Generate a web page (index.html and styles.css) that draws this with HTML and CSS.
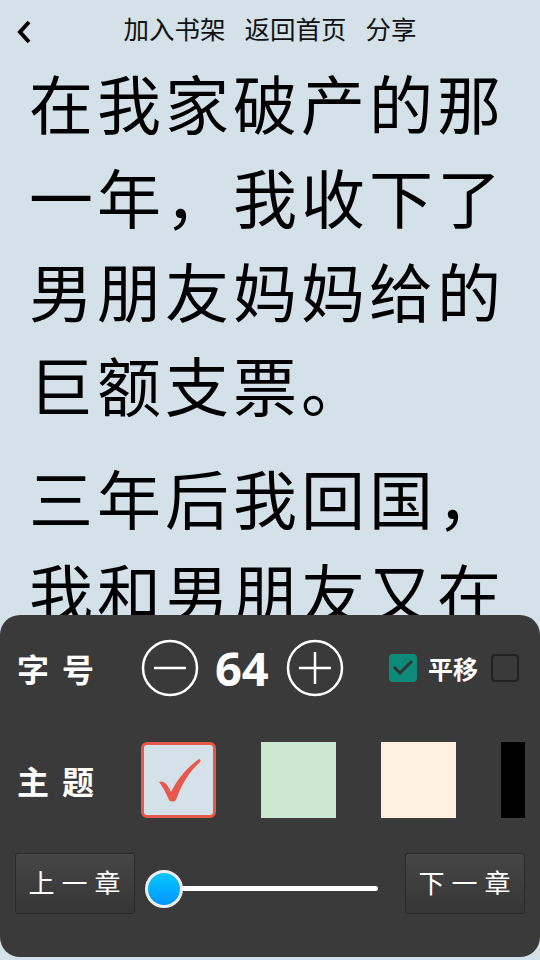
FILE: index.html
```html
<!DOCTYPE html>
<html lang="zh-CN">
<head>
    <meta charset="UTF-8">
    <meta name="viewport" content="width=device-width, initial-scale=1.0">
    <title>阅读</title>
    <link rel="stylesheet" href="styles.css">
</head>
<body>
    <div class="topbar">
        <svg class="back" width="18" height="26" viewBox="0 0 18 26">
            <path d="M14 3 L5 13 L14 23" fill="none" stroke="#000" stroke-width="4"/>
        </svg>
        <div class="menu">
            <span>加入书架</span>
            <span>返回首页</span>
            <span>分享</span>
        </div>
    </div>

    <div class="article">
        <p>在我家破产的那一年，我收下了男朋友妈妈给的巨额支票。</p>
        <p>三年后我回国，我和男朋友又在</p>
    </div>

    <!-- 设置面板 -->
    <div class="panel">
        <div class="row">
            <div class="label">字号</div>
            <svg class="round-btn" width="58" height="58" viewBox="0 0 58 58">
                <circle cx="29" cy="29" r="27" fill="none" stroke="#fff" stroke-width="2.5"/>
                <path d="M13 29 H45" stroke="#fff" stroke-width="2.5"/>
            </svg>
            <div class="size-value">64</div>
            <svg class="round-btn" width="58" height="58" viewBox="0 0 58 58">
                <circle cx="29" cy="29" r="27" fill="none" stroke="#fff" stroke-width="2.5"/>
                <path d="M13 29 H45 M29 13 V45" stroke="#fff" stroke-width="2.5"/>
            </svg>
            <div class="options">
                <span class="check checked">
                    <svg width="28" height="28" viewBox="0 0 28 28">
                        <path d="M5 13 L11 19 L23 7" fill="none" stroke="#333" stroke-width="3"/>
                    </svg>
                </span>
                <span class="option-text">平移</span>
                <span class="check"></span>
            </div>
        </div>

        <div class="row themes-row">
            <div class="label">主题</div>
            <div class="themes">
                <div class="theme theme-blue selected">
                    <svg width="70" height="70" viewBox="0 0 70 70">
                        <path d="M15 37 C19 35 23 38 27 47 C34 33 44 22 55 14 C57 15 57 16 56 17 C45 27 37 40 32 55 C30 57 27 57 25 55 C22 48 19 42 15 37 Z" fill="#e8574c"/>
                    </svg>
                </div>
                <div class="theme theme-green"></div>
                <div class="theme theme-cream"></div>
                <div class="theme theme-black"></div>
            </div>
        </div>

        <div class="row nav-row">
            <button class="chapter-btn">上一章</button>
            <div class="slider">
                <div class="track"></div>
                <div class="thumb"></div>
            </div>
            <button class="chapter-btn">下一章</button>
        </div>
    </div>
</body>
</html>
```

FILE: styles.css
```css
body {
    margin: 0;
    height: 960px;
    overflow: hidden;
    background-color: #d4e1e8;
    font-family: "Noto Sans CJK SC", "Noto Sans", sans-serif;
    color: #000;
}

/* 顶部栏 */
.topbar {
    position: relative;
    height: 54px;
    display: flex;
    align-items: center;
    justify-content: center;
}
.back {
    position: absolute;
    left: 15px;
    top: 19px;
}
.menu {
    display: flex;
    gap: 19px;
    font-size: 25.5px;
    color: #111;
}

/* 正文 */
.article {
    padding: 0 28px 0 29px;
}
.article p {
    margin: 0 0 19px;
    font-size: 64px;
    line-height: 94px;
    letter-spacing: 4px;
}

/* 底部设置面板 */
.panel {
    position: fixed;
    left: 0;
    right: 0;
    bottom: 3px;
    height: 318px;
    padding: 24px 15px 0;
    background-color: #3a3a3a;
    border-radius: 20px;
    color: #fff;
}
.row {
    display: flex;
    align-items: center;
}
.label {
    width: 124px;
    padding-left: 2px;
    font-size: 32px;
    font-weight: bold;
    letter-spacing: 13px;
}
.round-btn {
    display: block;
}
.size-value {
    margin: 0 17px 0 16px;
    font-family: "Open Sans", sans-serif;
    font-size: 47px;
    line-height: 58px;
    font-weight: bold;
}
.options {
    margin-left: auto;
    margin-right: 6px;
    display: flex;
    align-items: center;
}
.check {
    width: 24px;
    height: 24px;
    border: 2px solid #222;
    border-radius: 4px;
    display: flex;
}
.check.checked {
    width: 28px;
    height: 28px;
    border: none;
    background-color: #0e8a7a;
}
.option-text {
    margin: 0 13px 0 11px;
    font-size: 25px;
    font-weight: bold;
}

/* 主题色 */
.themes-row {
    margin-top: 45px;
}
.themes {
    width: 384px;
    display: flex;
    gap: 45px;
    overflow: hidden;
}
.theme {
    flex: none;
    width: 75px;
    height: 76px;
}
.theme-blue {
    background-color: #d4e1e8;
}
.theme-green {
    background-color: #cce8d0;
}
.theme-cream {
    background-color: #fef1e2;
}
.theme-black {
    background-color: #000;
}
.selected {
    box-sizing: border-box;
    border: 3px solid #e8574c;
    border-radius: 6px;
}
.selected svg {
    display: block;
}

/* 翻页 */
.nav-row {
    margin-top: 35px;
}
.chapter-btn {
    width: 120px;
    height: 61px;
    padding: 0 0 4px 6px;
    background: linear-gradient(#464646, #363636);
    border: 1px solid #2a2a2a;
    border-radius: 3px;
    color: #fff;
    font-family: "Noto Sans CJK SC", sans-serif;
    font-size: 26px;
    letter-spacing: 7px;
}
.slider {
    flex: 1;
    position: relative;
    height: 61px;
}
.track {
    position: absolute;
    left: 25px;
    right: 27px;
    top: 33px;
    height: 5px;
    border-radius: 3px;
    background-color: #fff;
}
.thumb {
    position: absolute;
    left: 10px;
    top: 17px;
    width: 32px;
    height: 32px;
    border: 3px solid #eee;
    border-radius: 50%;
    background: linear-gradient(#08c8ff, #0096ff);
}
```
